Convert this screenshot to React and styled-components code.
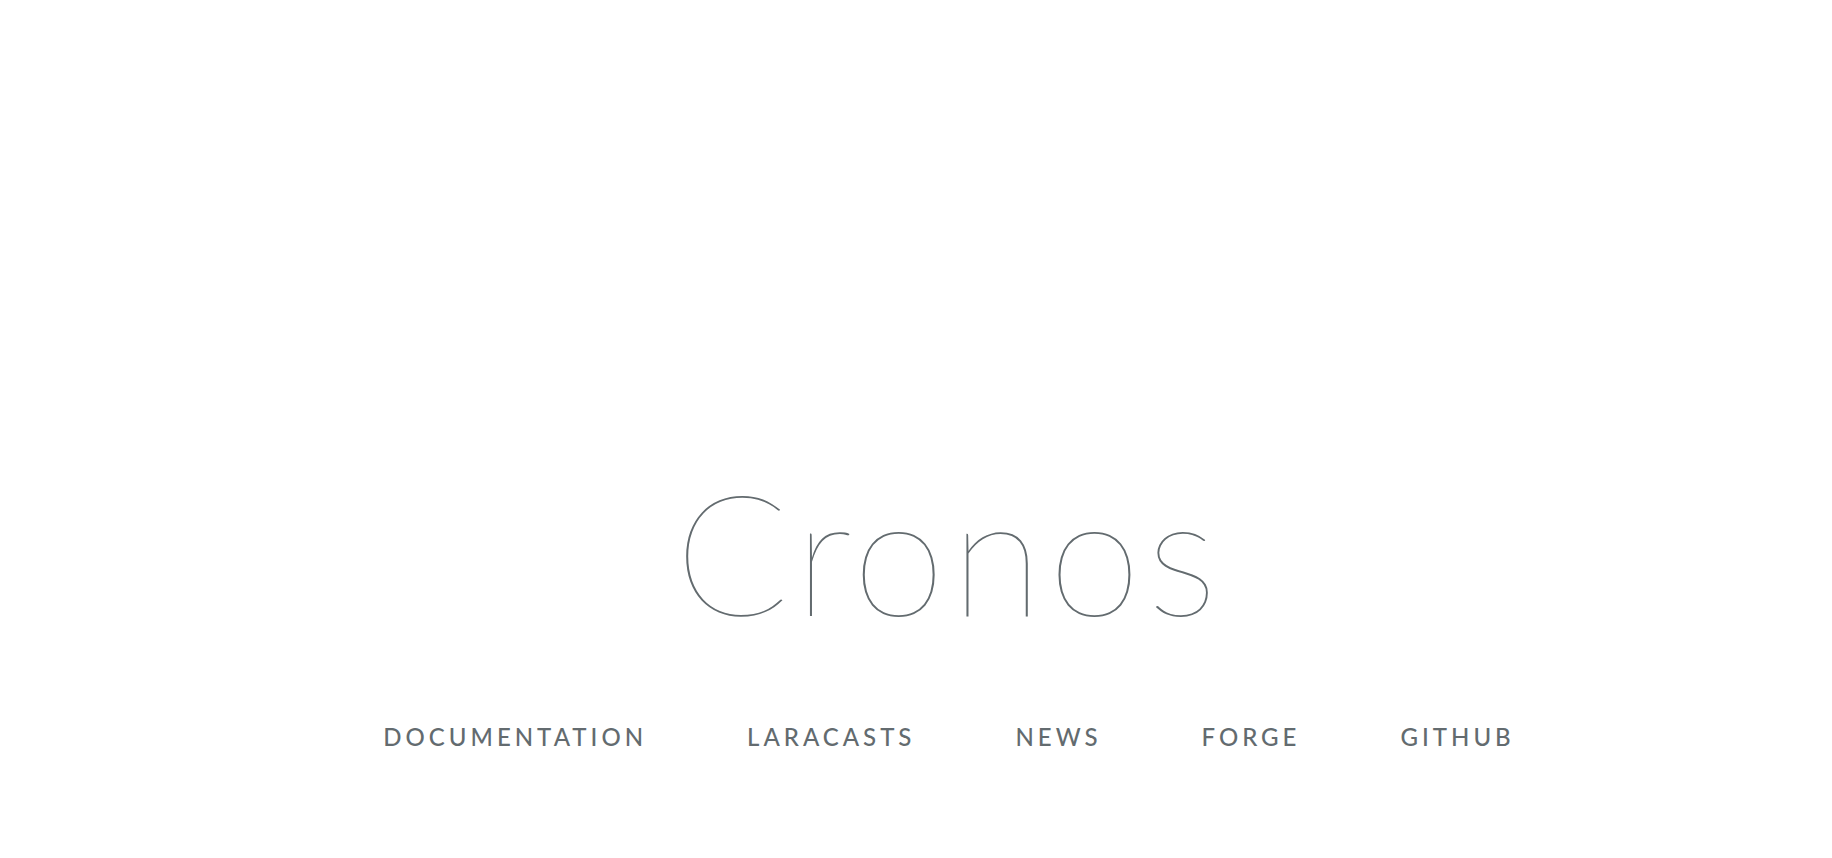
import React from 'react';
import styled, { createGlobalStyle } from 'styled-components';

const GlobalStyle = createGlobalStyle`
  html, body {
    margin: 0;
    height: 100vh;
    background-color: #fff;
    color: #636b6f;
    font-family: Lato, "Liberation Sans", sans-serif;
    font-weight: 100;
  }
`;

const FullHeight = styled.div`
  box-sizing: border-box;
  height: 100vh;
  padding: 451px 0 0 66px;
  display: flex;
  align-items: flex-start;
  justify-content: center;
`;

const Content = styled.div`
  text-align: center;
`;

const Title = styled.div`
  font-size: 168px;
  font-weight: 200;
  line-height: 1.2;
  letter-spacing: 6px;
  margin-bottom: 69px;
`;

const Links = styled.div`
  display: flex;
  justify-content: center;
`;

const Link = styled.a`
  color: #636b6f;
  padding: 0 50px;
  font-size: 24px;
  font-weight: 500;
  letter-spacing: 4px;
  text-decoration: none;
  text-transform: uppercase;
`;

const items = ['Documentation', 'Laracasts', 'News', 'Forge', 'GitHub'];

const App = () => {
  return (
    <>
      <GlobalStyle />
      <FullHeight>
        <Content>
          <Title>Cronos</Title>
          <Links>
            {items.map((item) => (
              <Link key={item} href="#">
                {item}
              </Link>
            ))}
          </Links>
        </Content>
      </FullHeight>
    </>
  );
};

export default App;
